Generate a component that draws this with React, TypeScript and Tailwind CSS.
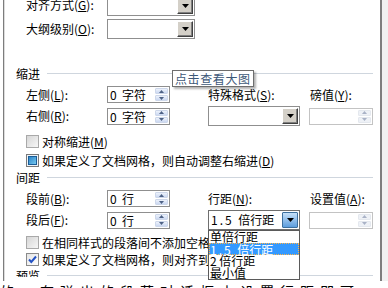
import React from 'react';

const Mn: React.FC<{ c: string }> = ({ c }) => (
    <>
        (<u>{c}</u>)
    </>
);

const Tri: React.FC<{ up?: boolean; className?: string }> = ({ up, className }) => (
    <svg width="5" height="3" viewBox="0 0 5 3" className={className}>
        <path d={up ? 'M0 3h5L2.5 0z' : 'M0 0h5L2.5 3z'} fill="currentColor" />
    </svg>
);

const ArrowBtn: React.FC<{ hot?: boolean }> = ({ hot }) =>
    hot ? (
        <div className="m-px flex w-[16px] items-center justify-center rounded-[1px] border border-[#3c6f9e] bg-gradient-to-b from-[#c6e0f8] to-[#5c9ddd] text-black">
            <svg width="7" height="4" viewBox="0 0 7 4">
                <path d="M0 0h7L3.5 4z" fill="currentColor" />
            </svg>
        </div>
    ) : (
        <div className="m-px flex w-[16px] items-center justify-center border border-t-white border-l-white border-r-[#404040] border-b-[#404040] bg-[#d4d0c8] text-black shadow-[inset_-1px_-1px_0_#808080]">
            <svg width="7" height="4" viewBox="0 0 7 4">
                <path d="M0 0h7L3.5 4z" fill="currentColor" />
            </svg>
        </div>
    );

const Dropdown: React.FC<{ value?: React.ReactNode; hot?: boolean; w: string; children?: React.ReactNode }> = ({ value, hot, w, children }) => (
    <div className={`relative flex h-[20px] ${w} border bg-white ${hot ? 'border-[#6f6f6f]' : 'border-[#8f8f8f]'}`}>
        <div className="flex-1 whitespace-pre pl-[2px] leading-[18px]">{value}</div>
        <ArrowBtn hot={hot} />
        {children}
    </div>
);

const Spin: React.FC<{ value?: string; disabled?: boolean; w: string }> = ({ value, disabled, w }) => (
    <div className={`flex h-[17px] ${w} border bg-white ${disabled ? 'border-[#c3c3c3]' : 'border-[#8f8f8f]'}`}>
        <div className="flex-1 whitespace-pre pl-[2px] leading-[15px]">{value}</div>
        <div className="flex w-[14px] flex-col justify-between py-px pr-px">
            {[true, false].map((up) => (
                <div
                    key={String(up)}
                    className={`flex h-[6px] items-center justify-center rounded-[1px] border ${
                        disabled
                            ? 'border-[#e4e8ee] bg-[#eef1f6] text-[#a9b2c6]'
                            : 'border-[#cdd7ea] bg-gradient-to-b from-[#edf2fb] to-[#cbd8f1] text-[#4d6185]'
                    }`}
                >
                    <Tri up={up} />
                </div>
            ))}
        </div>
    </div>
);

const Check: React.FC<{ state: 'off' | 'mixed' | 'on'; label: React.ReactNode }> = ({ state, label }) => (
    <div className="flex h-[13px] items-center gap-[3px] pl-[21px]">
        {state === 'off' && <div className="h-[13px] w-[13px] border border-[#a9a9a9] bg-gradient-to-br from-[#d6d6d6] to-[#f7f7f7]" />}
        {state === 'mixed' && (
            <div className="h-[13px] w-[13px] border border-[#7a7a7a] bg-[#eef3f8] p-px">
                <div className="h-full w-full border border-[#1b5d98] bg-gradient-to-br from-[#2b86c9] to-[#74c7ee]" />
            </div>
        )}
        {state === 'on' && (
            <div className="flex h-[13px] w-[13px] items-center justify-center border border-[#8a8a8a] bg-gradient-to-br from-[#e4e4e4] to-white">
                <svg width="9" height="9" viewBox="0 0 9 9">
                    <path d="M1 4.5l2.3 2.5L8 1.5" stroke="#2352c4" strokeWidth="2" fill="none" />
                </svg>
            </div>
        )}
        <span className="leading-[13px]">{label}</span>
    </div>
);

const Heading: React.FC<{ text: string }> = ({ text }) => (
    <div className="flex h-[12px] items-center pl-[11px] pr-[7px]">
        <span className="leading-[12px]">{text}</span>
        <div className="ml-[7px] -mt-[2px] h-px flex-1 bg-[#cfd6de]" />
    </div>
);

export default function App() {
    return (
        <div className="relative h-[288px] w-[388px] overflow-hidden bg-white font-['Noto_Sans_CJK_SC','Noto_Sans',sans-serif] text-[12px] text-black">
            <div className="flex h-[281px]">
                <div className="w-[3px]" />
                <div className="w-px bg-[#7d7d7d]" />
                <div className="w-px bg-[#dcdcdc]" />

                <div className="relative flex flex-1 flex-col">
                    <div className="-mt-[4px] flex h-[20px] items-center">
                        <span className="-mt-[3px] w-[102px] pl-[21px]">
                            对齐方式<Mn c="G" />:
                        </span>
                        <Dropdown w="w-[88px]" />
                    </div>
                    <div className="mt-[3px] flex h-[20px] items-center">
                        <span className="w-[102px] pl-[21px]">
                            大纲级别<Mn c="O" />:
                        </span>
                        <Dropdown w="w-[88px]" />
                    </div>

                    <div className="mt-[29px]">
                        <Heading text="缩进" />
                    </div>

                    <div className="mt-[6px] flex h-[17px] items-center">
                        <span className="w-[102px] pl-[21px]">
                            左侧<Mn c="L" />:
                        </span>
                        <Spin w="w-[63px]" value={'0  字符'} />
                        <span className="ml-[38px] w-[93px]">
                            特殊格式<Mn c="S" />:
                        </span>
                        <span className="ml-[9px]">
                            磅值<Mn c="Y" />:
                        </span>
                    </div>
                    <div className="mt-[3px] flex h-[20px] items-center">
                        <span className="w-[102px] pl-[21px]">
                            右侧<Mn c="R" />:
                        </span>
                        <Spin w="w-[63px]" value={'0  字符'} />
                        <div className="ml-[38px]">
                            <Dropdown w="w-[92px]" />
                        </div>
                        <div className="ml-[9px]">
                            <Spin w="w-[64px]" disabled />
                        </div>
                    </div>

                    <div className="mt-[9px]">
                        <Check state="off" label={<>对称缩进<Mn c="M" /></>} />
                    </div>
                    <div className="mt-[6px]">
                        <Check state="mixed" label={<>如果定义了文档网格，则自动调整右缩进<Mn c="D" /></>} />
                    </div>

                    <div className="mt-[5px]">
                        <Heading text="间距" />
                    </div>

                    <div className="mt-[6px] flex h-[17px] items-center">
                        <span className="w-[102px] pl-[21px]">
                            段前<Mn c="B" />:
                        </span>
                        <Spin w="w-[63px]" value={'0  行'} />
                        <span className="ml-[38px] w-[93px]">
                            行距<Mn c="N" />:
                        </span>
                        <span className="ml-[9px]">
                            设置值<Mn c="A" />:
                        </span>
                    </div>
                    <div className="mt-[3px] flex h-[20px] items-center">
                        <span className="w-[102px] pl-[21px]">
                            段后<Mn c="F" />:
                        </span>
                        <Spin w="w-[63px]" value={'0  行'} />
                        <div className="relative z-10 ml-[38px]">
                            <Dropdown
                                w="w-[92px]"
                                hot
                                value={
                                    <>
                                        <span className="tracking-[2px]">1.5 </span>倍行距
                                    </>
                                }
                            >
                                <div className="absolute -left-px top-[19px] w-[92px] border border-[#5a5a5a] bg-white leading-[12px]">
                                    <div className="h-[12px] pl-px">单倍行距</div>
                                    <div className="h-[12px] border border-dotted border-[#ffb347] bg-[#3399ff] text-white">
                                        <span className="tracking-[2px]">1.5 </span>倍行距
                                    </div>
                                    <div className="h-[12px] whitespace-pre pl-px">2 倍行距</div>
                                    <div className="h-[12px] pl-px">最小值</div>
                                </div>
                            </Dropdown>
                        </div>
                        <div className="ml-[9px]">
                            <Spin w="w-[64px]" disabled />
                        </div>
                    </div>

                    <div className="mt-[6px]">
                        <Check state="off" label={<>在相同样式的段落间不添加空格<Mn c="C" /></>} />
                    </div>
                    <div className="mt-[4px]">
                        <Check state="on" label={<>如果定义了文档网格，则对齐到网格<Mn c="W" /></>} />
                    </div>

                    <div className="mt-[4px] h-[7px] overflow-hidden">
                        <Heading text="预览" />
                    </div>

                    <div className="absolute left-[167px] top-[70px] z-20 border border-[#6e6e6e] bg-white px-[2px] leading-[15px] tracking-[0.6px] text-[#3d5878] shadow-[2px_2px_2px_rgba(0,0,0,0.3)]">
                        点击查看大图
                    </div>
                </div>

                <div className="w-[2px] bg-[#7d7d7d]" />
                <div className="w-[6px] bg-[#f0f0f0]" />
            </div>

            <div className="h-[7px] overflow-hidden">
                <div className="mt-[3px] whitespace-nowrap text-[14px] leading-[14px] tracking-[6px]">
                    的，在弹出的段落对话框中设置行距即可。
                </div>
            </div>
        </div>
    );
}
